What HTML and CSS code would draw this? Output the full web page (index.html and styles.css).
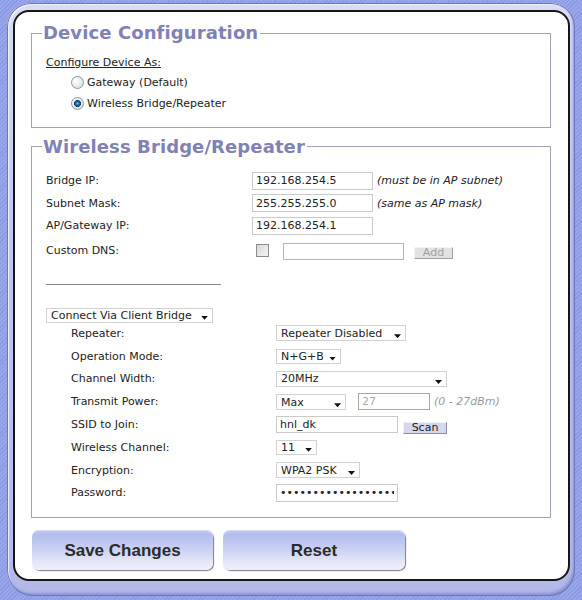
FILE: index.html
```html
<!DOCTYPE html>
<html lang="en">
<head>
<meta charset="utf-8">
<title>Device Configuration</title>
<link rel="stylesheet" href="styles.css">
</head>
<body>
<div class="frame">
  <div class="panel">
    <fieldset class="box">
      <legend>Device Configuration</legend>
      <div class="device-body">
        <div class="heading">Configure Device As:</div>
        <label class="radio-row"><input type="radio" name="mode" class="radio">Gateway (Default)</label>
        <label class="radio-row"><input type="radio" name="mode" class="radio" checked>Wireless Bridge/Repeater</label>
      </div>
    </fieldset>

    <fieldset class="box box-bridge">
      <legend>Wireless Bridge/Repeater</legend>
      <div class="bridge-body">
        <div class="ip-grid">
          <span class="lbl">Bridge IP:</span>
          <div class="ctl"><input class="txt w121" value="192.168.254.5"><span class="note">(must be in AP subnet)</span></div>
          <span class="lbl">Subnet Mask:</span>
          <div class="ctl"><input class="txt w121" value="255.255.255.0"><span class="note">(same as AP mask)</span></div>
          <span class="lbl">AP/Gateway IP:</span>
          <div class="ctl"><input class="txt w121" value="192.168.254.1"></div>
        </div>
        <div class="dns-row">
          <span class="lbl">Custom DNS:</span>
          <div class="dns-ctl">
            <input type="checkbox" class="check">
            <input class="txt w121 h17 dns-input" value="">
            <button class="mini-btn mini-disabled" disabled>Add</button>
          </div>
        </div>
        <div class="rule"></div>
        <div class="sel-wrap w167 h15"><select class="sel"><option>Connect Via Client Bridge</option></select></div>
        <div class="client-grid">
          <span class="lbl">Repeater:</span>
          <div class="ctl"><div class="sel-wrap w130"><select class="sel"><option>Repeater Disabled</option></select></div></div>
          <span class="lbl">Operation Mode:</span>
          <div class="ctl"><div class="sel-wrap w65 h15"><select class="sel"><option>N+G+B</option></select></div></div>
          <span class="lbl">Channel Width:</span>
          <div class="ctl"><div class="sel-wrap w171"><select class="sel"><option>20MHz</option></select></div></div>
          <span class="lbl">Transmit Power:</span>
          <div class="ctl ctl-end"><div class="sel-wrap w70"><select class="sel"><option>Max</option></select></div><input class="txt w72 h17 txt-disabled power-input" value="27" disabled><span class="note note-muted">(0 - 27dBm)</span></div>
          <span class="lbl">SSID to Join:</span>
          <div class="ctl ctl-end"><input class="txt w122 h17" value="hnl_dk"><button class="mini-btn scan-btn">Scan</button></div>
          <span class="lbl">Wireless Channel:</span>
          <div class="ctl"><div class="sel-wrap w41 h15"><select class="sel"><option>11</option></select></div></div>
          <span class="lbl">Encryption:</span>
          <div class="ctl"><div class="sel-wrap w84"><select class="sel"><option>WPA2 PSK</option></select></div></div>
          <span class="lbl">Password:</span>
          <div class="ctl"><input type="password" class="txt w122" value="abcdefghijklmnopqrst"></div>
        </div>
      </div>
    </fieldset>

    <div class="actions">
      <button class="big-btn">Save Changes</button>
      <button class="big-btn big-btn-wide">Reset</button>
    </div>
  </div>
</div>
</body>
</html>
```
FILE: styles.css
```css
html, body {
  margin: 0;
  height: 100%;
}

body {
  background: repeating-linear-gradient(135deg, #8a9ae2 0 1px, #96a6e8 1px 3px);
  font-family: "DejaVu Sans", Verdana, sans-serif;
  font-size: 11px;
  color: #222;
  overflow: hidden;
}

.frame {
  box-sizing: border-box;
  height: 593px;
  margin: 3px 7px 0 7px;
  padding: 7px 5px 15px 6px;
  border-radius: 24px 24px 26px 26px;
  background: linear-gradient(#d8dcf6, #c0c6ee 40%, #b2b9e8);
  box-shadow: inset 0 0 0 1px #6c75bf, inset 2px 2px 1px #f0f2fd, inset -2px -3px 3px #8a92cf;
}

.panel {
  box-sizing: border-box;
  height: 100%;
  border: 2px solid #161616;
  border-radius: 16px;
  background: #fff;
  padding: 10px 17px 0 16px;
}

.box {
  margin: 0;
  padding: 0;
  border: 1px solid #a2a2b2;
  min-width: 0;
}

.box legend {
  margin-left: 10px;
  padding: 0 2px 0 1px;
  font-size: 18px;
  line-height: 22px;
  font-weight: bold;
  letter-spacing: 0.1px;
  color: #8081b4;
}

.device-body {
  padding: 11.5px 0 13px 14px;
}

.heading {
  line-height: 14px;
  text-decoration: underline;
  margin-bottom: 2.3px;
}

.radio-row {
  display: flex;
  align-items: center;
  height: 21px;
  padding-left: 25px;
}

.radio {
  appearance: none;
  box-sizing: border-box;
  width: 13px;
  height: 13px;
  margin: 0 3px 0 0;
  border-radius: 50%;
  border: 1px solid #8b98a8;
  background: radial-gradient(circle at 35% 35%, #ffffff, #d2d6dc);
}

.radio:checked {
  background:
    radial-gradient(circle at 50% 50%, #8cc6ea 0, #2a70a8 1.5px, #0d3f70 3.2px, rgba(13,63,112,0) 3.8px),
    radial-gradient(circle at 35% 35%, #ffffff, #d2d6dc);
}

.box-bridge {
  margin-top: 8px;
}

.bridge-body {
  padding: 14px 0 12.5px 14px;
}

.ip-grid {
  display: grid;
  grid-template-columns: 206px auto;
  grid-auto-rows: 18px;
  row-gap: 4.5px;
  align-items: center;
}

.ctl {
  display: flex;
  align-items: center;
}

.ctl-end {
  align-items: flex-end;
}

.lbl {
  line-height: 14px;
  padding-top: 1px;
  white-space: nowrap;
}

.txt {
  box-sizing: border-box;
  height: 18px;
  margin: 0;
  padding: 0 3px;
  border: 1px solid #cacaca;
  background: #fff;
  font: 11px "DejaVu Sans", Verdana, sans-serif;
  color: #222;
  outline: none;
}

.txt-disabled {
  border-color: #a8a8a8;
  color: #aaa;
  background: #fff;
}

.note {
  margin-left: 4px;
  font-style: italic;
  white-space: nowrap;
}

.note-muted {
  color: #9a9a9a;
  align-self: center;
}

.w121 { width: 121px; }
.w122 { width: 122px; }
.w72 { width: 72px; }
.h17 { height: 17px; }
.h15 { height: 15px; }

.dns-row {
  display: grid;
  grid-template-columns: 206px auto;
  height: 18px;
  margin-top: 8px;
  align-items: start;
}

.dns-ctl {
  display: flex;
  align-items: flex-start;
}

.check {
  appearance: none;
  box-sizing: border-box;
  width: 13px;
  height: 13px;
  margin: 1px 0 0 4px;
  border: 1px solid #8c8c8c;
  background: linear-gradient(135deg, #d6d6d6, #f6f6f6);
}

.dns-input {
  margin-left: 14px;
  border-color: #b4b4b4;
}

.mini-btn {
  box-sizing: border-box;
  height: 12px;
  padding: 0;
  border: 1px solid;
  font: 11px "DejaVu Sans", Verdana, sans-serif;
  line-height: 9px;
}

.mini-disabled {
  width: 39px;
  margin: 4px 0 0 10px;
  background: #e2e2e2;
  border-color: #f4f4f4 #a0a0a0 #a0a0a0 #f4f4f4;
  color: #a0a0a0;
}

.scan-btn {
  width: 44px;
  margin-left: 5px;
  margin-bottom: -1px;
  background: #d4d8ee;
  border-color: #eef0fa #8e8e9e #8e8e9e #eef0fa;
  color: #222;
}

.rule {
  width: 175px;
  height: 1px;
  margin: 23px 0 23px 0;
  background: #858585;
}

.sel-wrap {
  position: relative;
  height: 16px;
}

.sel-wrap.h15 { height: 15px; }

.sel-wrap::after {
  content: "";
  position: absolute;
  right: 5px;
  bottom: 3px;
  width: 7px;
  height: 4px;
  background: #111;
  clip-path: polygon(0 0, 100% 0, 50% 100%);
  pointer-events: none;
}

.sel {
  appearance: none;
  box-sizing: border-box;
  display: block;
  width: 100%;
  height: 100%;
  margin: 0;
  padding: 0 14px 0 4px;
  border: 1px solid #d2d2d2;
  border-radius: 0;
  background: #fff;
  font: 11px "DejaVu Sans", Verdana, sans-serif;
  line-height: 13px;
  color: #222;
}

.w167 { width: 167px; }
.w130 { width: 130px; }
.w65 { width: 65px; }
.w171 { width: 171px; }
.w70 { width: 70px; }
.w41 { width: 41px; }
.w84 { width: 84px; }

.client-grid {
  display: grid;
  grid-template-columns: 205px auto;
  grid-auto-rows: 22.8px;
  align-items: center;
  margin-top: -0.9px;
  padding-left: 25px;
}

.power-input {
  margin-left: 12px;
}

.actions {
  display: flex;
  gap: 10px;
  margin-top: 12px;
  padding-left: 1px;
}

.big-btn {
  width: 181px;
  height: 40px;
  padding: 2px 0 0 0;
  border: 0;
  border-radius: 7px;
  font: bold 17px "Liberation Sans", Arial, sans-serif;
  color: #2b2b2b;
  background: linear-gradient(#c2cbf1 0%, #b2bdec 12%, #c8cff2 45%, #e4e7f7 80%, #eef0fa 100%);
  box-shadow: 1px 1px 1px #7c7c8c, inset 0 1px 0 #d6dcf8;
}

.big-btn-wide {
  width: 182px;
}
```
